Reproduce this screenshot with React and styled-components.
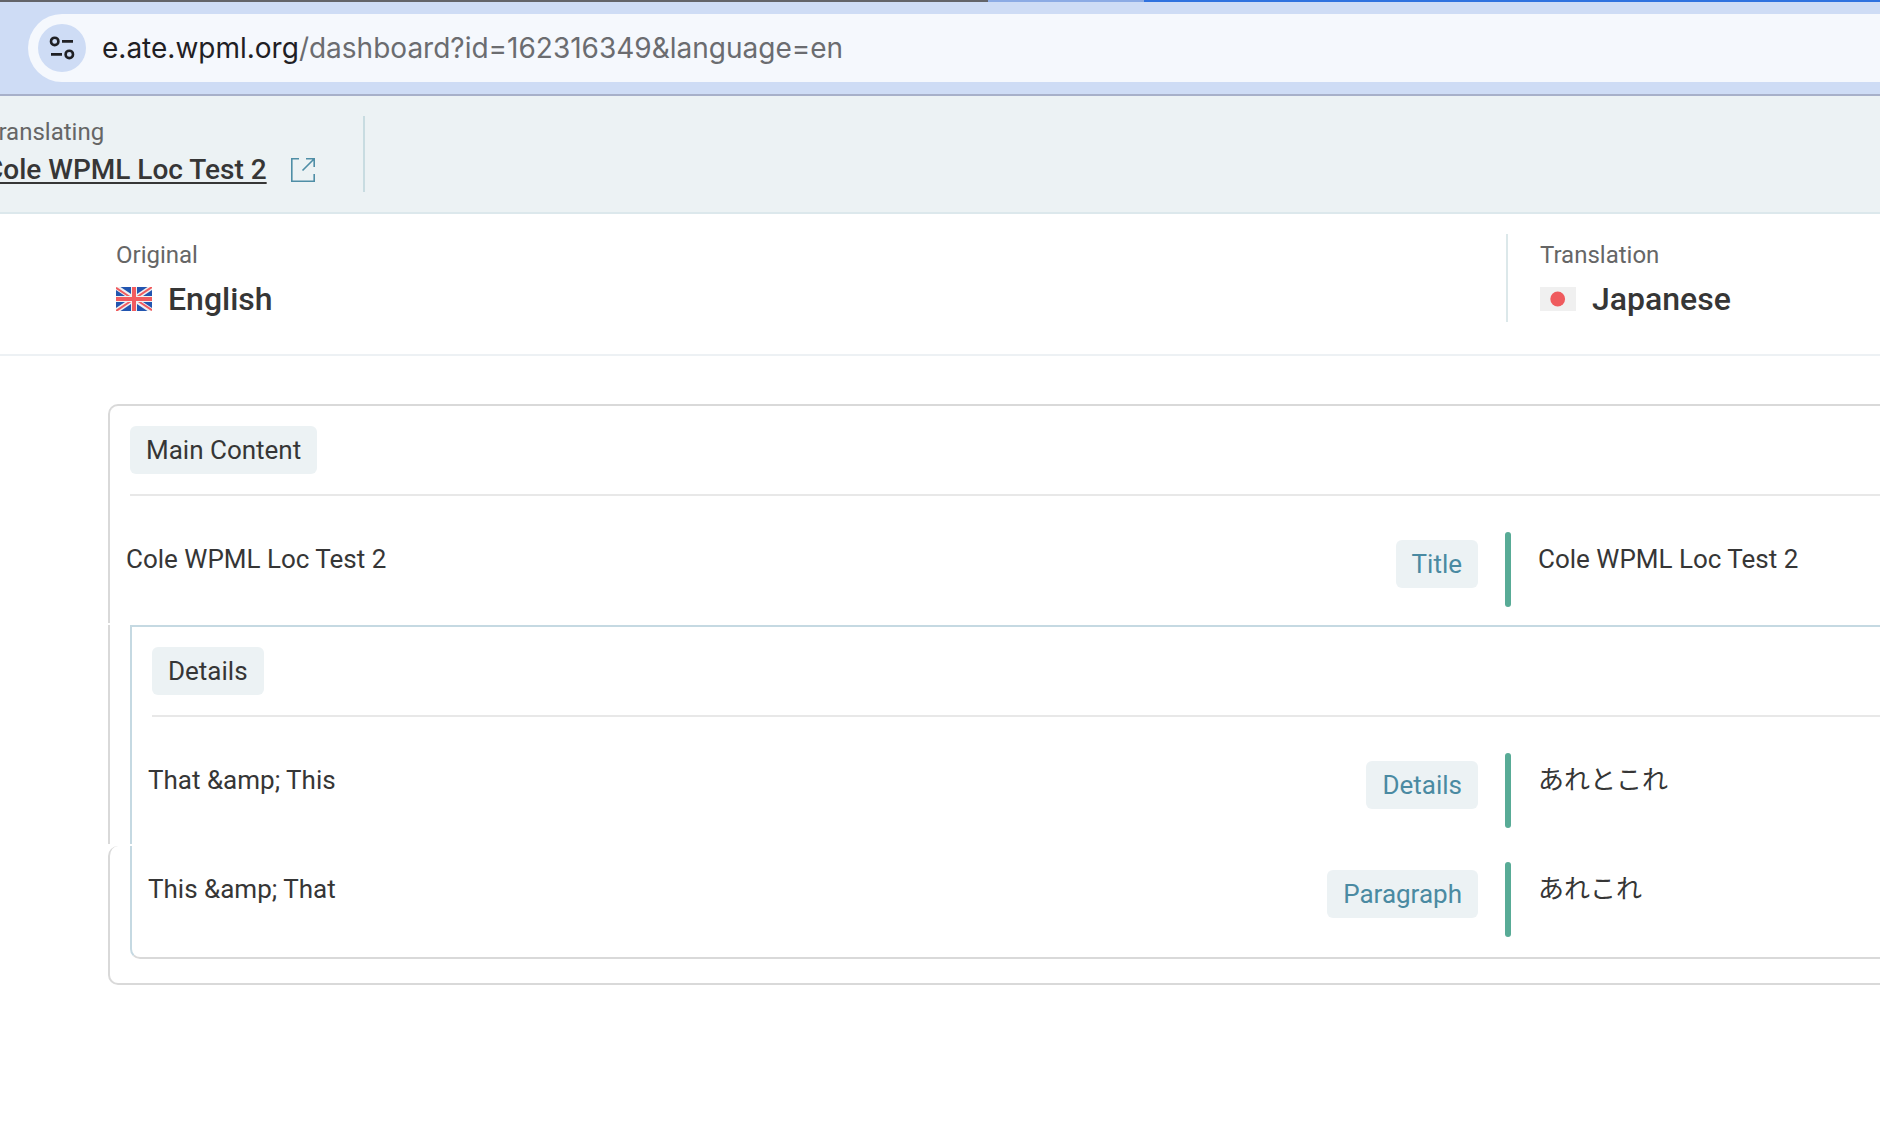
import React from "react";
import styled, { createGlobalStyle } from "styled-components";

const GlobalStyle = createGlobalStyle`
  * {
    box-sizing: border-box;
  }
  body {
    margin: 0;
    overflow-x: hidden;
    background-color: #ffffff;
    color: #363636;
    font-family: Roboto, "Noto Sans CJK JP", sans-serif;
    font-size: 26px;
    line-height: 32px;
  }
`;

/* browser bar */
const TabStrip = styled.div`
  display: grid;
  grid-template-columns: 988fr 156fr 736fr;
  height: 2px;
`;
const TabEdge = styled.span`
  background-color: ${(props) => props.$color};
`;
const BrowserBar = styled.div`
  padding: 12px 0 12px 28px;
  background-color: #cedcf5;
  border-bottom: 2px solid #a7b0c9;
`;
const AddressBar = styled.div`
  display: flex;
  align-items: center;
  gap: 16px;
  height: 68px;
  padding-left: 10px;
  border-radius: 34px 0 0 34px;
  background-color: #f5f8fd;
`;
const SiteInfoButton = styled.button`
  display: flex;
  align-items: center;
  justify-content: center;
  width: 48px;
  height: 48px;
  padding: 0;
  border: 0;
  border-radius: 50%;
  background-color: #cedcf5;
`;
const Url = styled.div`
  font-family: Inter, sans-serif;
  font-size: 28px;
  line-height: 36px;
  white-space: nowrap;
  color: #6b6c70;
`;
const UrlHost = styled.span`
  color: #1f2024;
`;

/* job header */
const JobHeader = styled.header`
  display: flex;
  padding: 20px 0;
  background-color: #ecf2f4;
  border-bottom: 2px solid #dce8ec;
`;
const JobInfo = styled.div`
  margin-left: -15px;
  padding-right: 48px;
  border-right: 2px solid #c8dce1;
`;
const JobLabel = styled.div`
  font-size: 24px;
  line-height: 32px;
  color: #666666;
`;
const JobTitle = styled.div`
  display: flex;
  align-items: center;
  gap: 24px;
  line-height: 44px;
`;
const JobLink = styled.a`
  font-size: 28px;
  font-weight: 500;
  color: #363636;
  text-decoration: underline;
  text-decoration-thickness: 2px;
  text-underline-offset: 3px;
  text-decoration-skip-ink: none;
  white-space: nowrap;
`;
const OpenLink = styled.a`
  display: flex;
`;

/* languages */
const Languages = styled.section`
  display: flex;
  padding: 20px 0 32px 116px;
  border-bottom: 2px solid #edf1f4;
`;
const Original = styled.div`
  flex: 1;
`;
const Translation = styled.div`
  width: 374px;
  padding-left: 32px;
  border-left: 2px solid #dce8ea;
`;
const LanguageLabel = styled.div`
  font-size: 24px;
  line-height: 42px;
  color: #666666;
`;
const LanguageName = styled.div`
  display: flex;
  align-items: center;
  gap: 16px;
  font-size: 32px;
  font-weight: 500;
  line-height: 46px;
`;

/* content */
const Content = styled.main`
  display: flex;
  flex-direction: column;
  gap: 2px;
  padding: 48px 0 48px 108px;
`;
const Group = styled.section`
  border-left: 2px solid #d9d9d9;
  ${(props) =>
    props.$first &&
    `
    border-top: 2px solid #d9d9d9;
    border-top-left-radius: 10px;
  `}
  ${(props) =>
    props.$last &&
    `
    padding-bottom: 24px;
    border-bottom: 2px solid #d9d9d9;
    border-radius: 10px 0 0 10px;
  `}
`;
const SubGroup = styled.div`
  margin-left: 20px;
  border-left: 2px solid #c5d9e2;
  ${(props) => props.$first && "border-top: 2px solid #c5d9e2;"}
  ${(props) =>
    props.$last &&
    `
    padding-bottom: 4px;
    border-bottom: 2px solid #d9d9d9;
    border-bottom-left-radius: 10px;
  `}
`;
const GroupHeader = styled.div`
  display: flex;
  margin: 0 0 20px 20px;
  padding: 20px 0;
  border-bottom: 2px solid #e8e8e8;
`;
const Badge = styled.span`
  padding: 8px 16px;
  border-radius: 6px;
  background-color: #ecf2f4;
  color: ${(props) => (props.$type ? "#4a8aa2" : "#363636")};
`;
const Row = styled.div`
  display: flex;
  align-items: flex-start;
  padding: 16px 0 16px 16px;
`;
const Source = styled.div`
  flex: 1;
  padding-top: 11px;
`;
const RowType = styled.div`
  display: flex;
  margin-right: 27px;
  padding-top: 8px;
`;
const Target = styled.div`
  position: relative;
  width: 375px;
  min-height: 75px;
  padding: 11px 0 0 33px;

  &::before {
    content: "";
    position: absolute;
    top: 0;
    bottom: 0;
    left: 0;
    width: 6px;
    border-radius: 3px;
    background-color: #58ab96;
  }
`;

function TuneIcon() {
  return (
    <svg width="26" height="26" viewBox="0 0 26 26" fill="none" stroke="#1f2024" strokeWidth="2.6">
      <circle cx="5.7" cy="6.4" r="3.7" />
      <path d="M13 6.4h11M2 19.4h11" />
      <circle cx="20.3" cy="19.4" r="3.7" />
    </svg>
  );
}

function OpenIcon() {
  return (
    <svg width="24" height="24" viewBox="0 0 24 24" fill="none" stroke="#4f8ea6" strokeWidth="1.6">
      <path d="M8 .8H.8v22.4h22.4V16M15 .8h8.2V9M23 1L11.5 12.5" />
    </svg>
  );
}

function UkFlag() {
  return (
    <svg width="36" height="24" viewBox="0 0 36 24">
      <path fill="#2255b0" d="M0 0h36v24H0z" />
      <path stroke="#f0f0f0" strokeWidth="5" d="M0 0l36 24M36 0L0 24" />
      <path stroke="#f05b5f" strokeWidth="2" d="M0 0.8L17 12M36 0L18 12M19 12l17 11.2M18 12L0 24" />
      <path fill="#f0f0f0" d="M15 0h6v24h-6zM0 9h36v6H0z" />
      <path fill="#f05b5f" d="M16 0h4v24h-4zM0 10h36v4H0z" />
    </svg>
  );
}

function JapanFlag() {
  return (
    <svg width="36" height="24" viewBox="0 0 36 24">
      <path fill="#f0f0f0" d="M0 0h36v24H0z" />
      <circle cx="17.7" cy="12" r="7.4" fill="#ef5b5e" />
    </svg>
  );
}

function ContentRow({ source, type, target, lang }) {
  return (
    <Row>
      <Source>{source}</Source>
      <RowType>
        <Badge $type>{type}</Badge>
      </RowType>
      <Target lang={lang}>{target}</Target>
    </Row>
  );
}

function App() {
  return (
    <>
      <GlobalStyle />
      <TabStrip>
        <TabEdge $color="#636469" />
        <TabEdge $color="#8cabe4" />
        <TabEdge $color="#2f72df" />
      </TabStrip>
      <BrowserBar>
        <AddressBar>
          <SiteInfoButton aria-label="View site information">
            <TuneIcon />
          </SiteInfoButton>
          <Url>
            <UrlHost>e.ate.wpml.org</UrlHost>/dashboard?id=162316349&amp;language=en
          </Url>
        </AddressBar>
      </BrowserBar>

      <JobHeader>
        <JobInfo>
          <JobLabel>Translating</JobLabel>
          <JobTitle>
            <JobLink href="#job">Cole WPML Loc Test 2</JobLink>
            <OpenLink href="#open" aria-label="Open the original">
              <OpenIcon />
            </OpenLink>
          </JobTitle>
        </JobInfo>
      </JobHeader>

      <Languages>
        <Original>
          <LanguageLabel>Original</LanguageLabel>
          <LanguageName>
            <UkFlag />
            English
          </LanguageName>
        </Original>
        <Translation>
          <LanguageLabel>Translation</LanguageLabel>
          <LanguageName>
            <JapanFlag />
            Japanese
          </LanguageName>
        </Translation>
      </Languages>

      <Content>
        <Group $first>
          <GroupHeader>
            <Badge>Main Content</Badge>
          </GroupHeader>
          <ContentRow source="Cole WPML Loc Test 2" type="Title" target="Cole WPML Loc Test 2" />
        </Group>
        <Group>
          <SubGroup $first>
            <GroupHeader>
              <Badge>Details</Badge>
            </GroupHeader>
            <ContentRow source="That &amp;amp; This" type="Details" target="あれとこれ" lang="ja" />
          </SubGroup>
        </Group>
        <Group $last>
          <SubGroup $last>
            <ContentRow source="This &amp;amp; That" type="Paragraph" target="あれこれ" lang="ja" />
          </SubGroup>
        </Group>
      </Content>
    </>
  );
}

export default App;
